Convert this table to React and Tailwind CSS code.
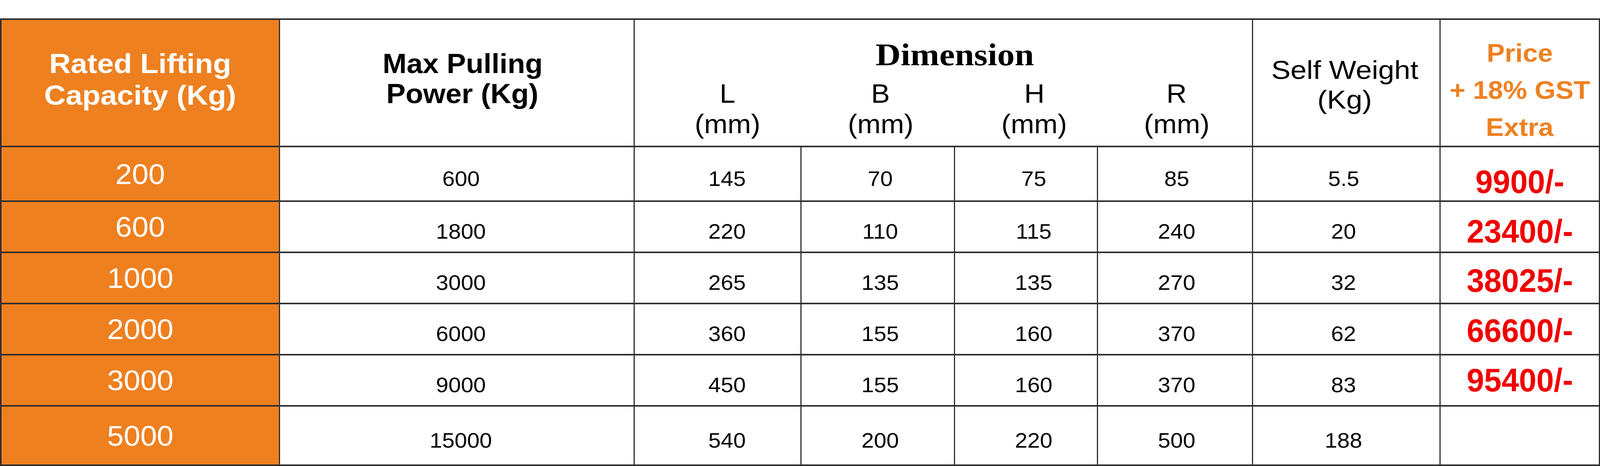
const rows = [
  { cap: "200", pull: "600", l: "145", b: "70", h: "75", r: "85", w: "5.5", price: "9900/-", ppt: "pt-[40px]" },
  { cap: "600", pull: "1800", l: "220", b: "110", h: "115", r: "240", w: "20", price: "23400/-", ppt: "pt-[24px]" },
  { cap: "1000", pull: "3000", l: "265", b: "135", h: "135", r: "270", w: "32", price: "38025/-", ppt: "pt-[14px]" },
  { cap: "2000", pull: "6000", l: "360", b: "155", h: "160", r: "370", w: "62", price: "66600/-", ppt: "pt-[8px]" },
  { cap: "3000", pull: "9000", l: "450", b: "155", h: "160", r: "370", w: "83", price: "95400/-", ppt: "pt-0" },
  { cap: "5000", pull: "15000", l: "540", b: "200", h: "220", r: "500", w: "188", price: "", ppt: "pt-0" },
];

const cell = "flex items-center justify-center border-r-[3px] border-b-4 border-[#2f2f2f]";

function Val({ children, pad }) {
  return (
    <div className={cell + " pt-[24px] " + pad}>
      <span className="inline-block scale-x-[1.083] text-[53px] leading-[53px] text-black">{children}</span>
    </div>
  );
}

function Sub({ letter, pad }) {
  return (
    <div className={"flex flex-col items-center " + pad}>
      <span className="inline-block scale-x-[1.045] text-[69px] leading-[78px] text-black">{letter}</span>
      <span className="inline-block scale-x-[1.045] text-[69px] leading-[78px] text-black">(mm)</span>
    </div>
  );
}

export default function App() {
  return (
    <div className="w-full min-w-[4096px] h-[1193px] bg-white pt-[47px] font-['Liberation_Sans',Arial,sans-serif] overflow-hidden">
      <div className="grid grid-cols-[713px_908px_427px_393px_366px_397px_480px_408px] grid-rows-[326px_140px_131px_131px_131px_131px_152px] border-t-4 border-l-4 border-[#2f2f2f]">
        {/* Header */}
        <div className="flex flex-col items-center bg-[#ee8020] pt-[71px] border-r-[3px] border-b-4 border-[#2f2f2f]">
          <span className="inline-block scale-x-[1.074] text-[71px] leading-[81px] font-bold text-white">Rated Lifting</span>
          <span className="inline-block scale-x-[1.074] text-[71px] leading-[81px] font-bold text-white">Capacity (Kg)</span>
        </div>
        <div className="flex flex-col items-center pt-[74px] pl-[29px] border-r-[3px] border-b-4 border-[#2f2f2f]">
          <span className="inline-block scale-x-[1.054] text-[70px] leading-[77px] font-bold text-black">Max Pulling</span>
          <span className="inline-block scale-x-[1.054] text-[70px] leading-[77px] font-bold text-black">Power (Kg)</span>
        </div>
        <div className="col-span-4 flex flex-col pt-[49px] border-r-[3px] border-b-4 border-[#2f2f2f]">
          <div className="flex justify-center pl-[58px]">
            <span className="inline-block scale-x-[1.112] font-['Liberation_Serif','Times_New_Roman',serif] text-[80px] leading-[80px] font-bold text-black">Dimension</span>
          </div>
          <div className="mt-[21px] grid grid-cols-[427px_393px_366px_394px]">
            <Sub letter="L" pad="pl-[48px]" />
            <Sub letter="B" pad="pl-[12px]" />
            <Sub letter="H" pad="pl-[39px]" />
            <Sub letter="R" pad="pl-[8px]" />
          </div>
        </div>
        <div className="flex flex-col items-center pt-[90px] pr-[8px] border-r-[3px] border-b-4 border-[#2f2f2f]">
          <span className="inline-block scale-x-[1.103] text-[67px] leading-[76px] text-black">Self Weight</span>
          <span className="inline-block scale-x-[1.103] text-[67px] leading-[76px] text-black">(Kg)</span>
        </div>
        <div className="flex flex-col items-center pt-[37px] border-r-[3px] border-b-4 border-[#2f2f2f]">
          <span className="inline-block scale-x-[1.064] text-[65px] leading-[95px] font-bold text-[#ee8121]">Price</span>
          <span className="inline-block scale-x-[1.064] text-[65px] leading-[95px] font-bold text-[#ee8121]">+ 18% GST</span>
          <span className="inline-block scale-x-[1.064] text-[65px] leading-[95px] font-bold text-[#ee8121]">Extra</span>
        </div>

        {/* Body */}
        {rows.map((r) => (
          <div key={r.cap} className="contents">
            <div className={cell + " bg-[#ee8020]"}>
              <span className="inline-block scale-x-[1.045] text-[73px] leading-[73px] text-white">{r.cap}</span>
            </div>
            <Val pad="pl-[21px]">{r.pull}</Val>
            <Val pad="pl-[48px]">{r.l}</Val>
            <Val pad="pl-[12px]">{r.b}</Val>
            <Val pad="pl-[39px]">{r.h}</Val>
            <Val pad="pl-[8px]">{r.r}</Val>
            <Val pad="pr-[14px]">{r.w}</Val>
            <div className={cell + " " + r.ppt}>
              <span className="inline-block scale-x-[0.967] text-[83px] leading-[83px] font-bold text-[#f00000]">{r.price}</span>
            </div>
          </div>
        ))}
      </div>
    </div>
  );
}
